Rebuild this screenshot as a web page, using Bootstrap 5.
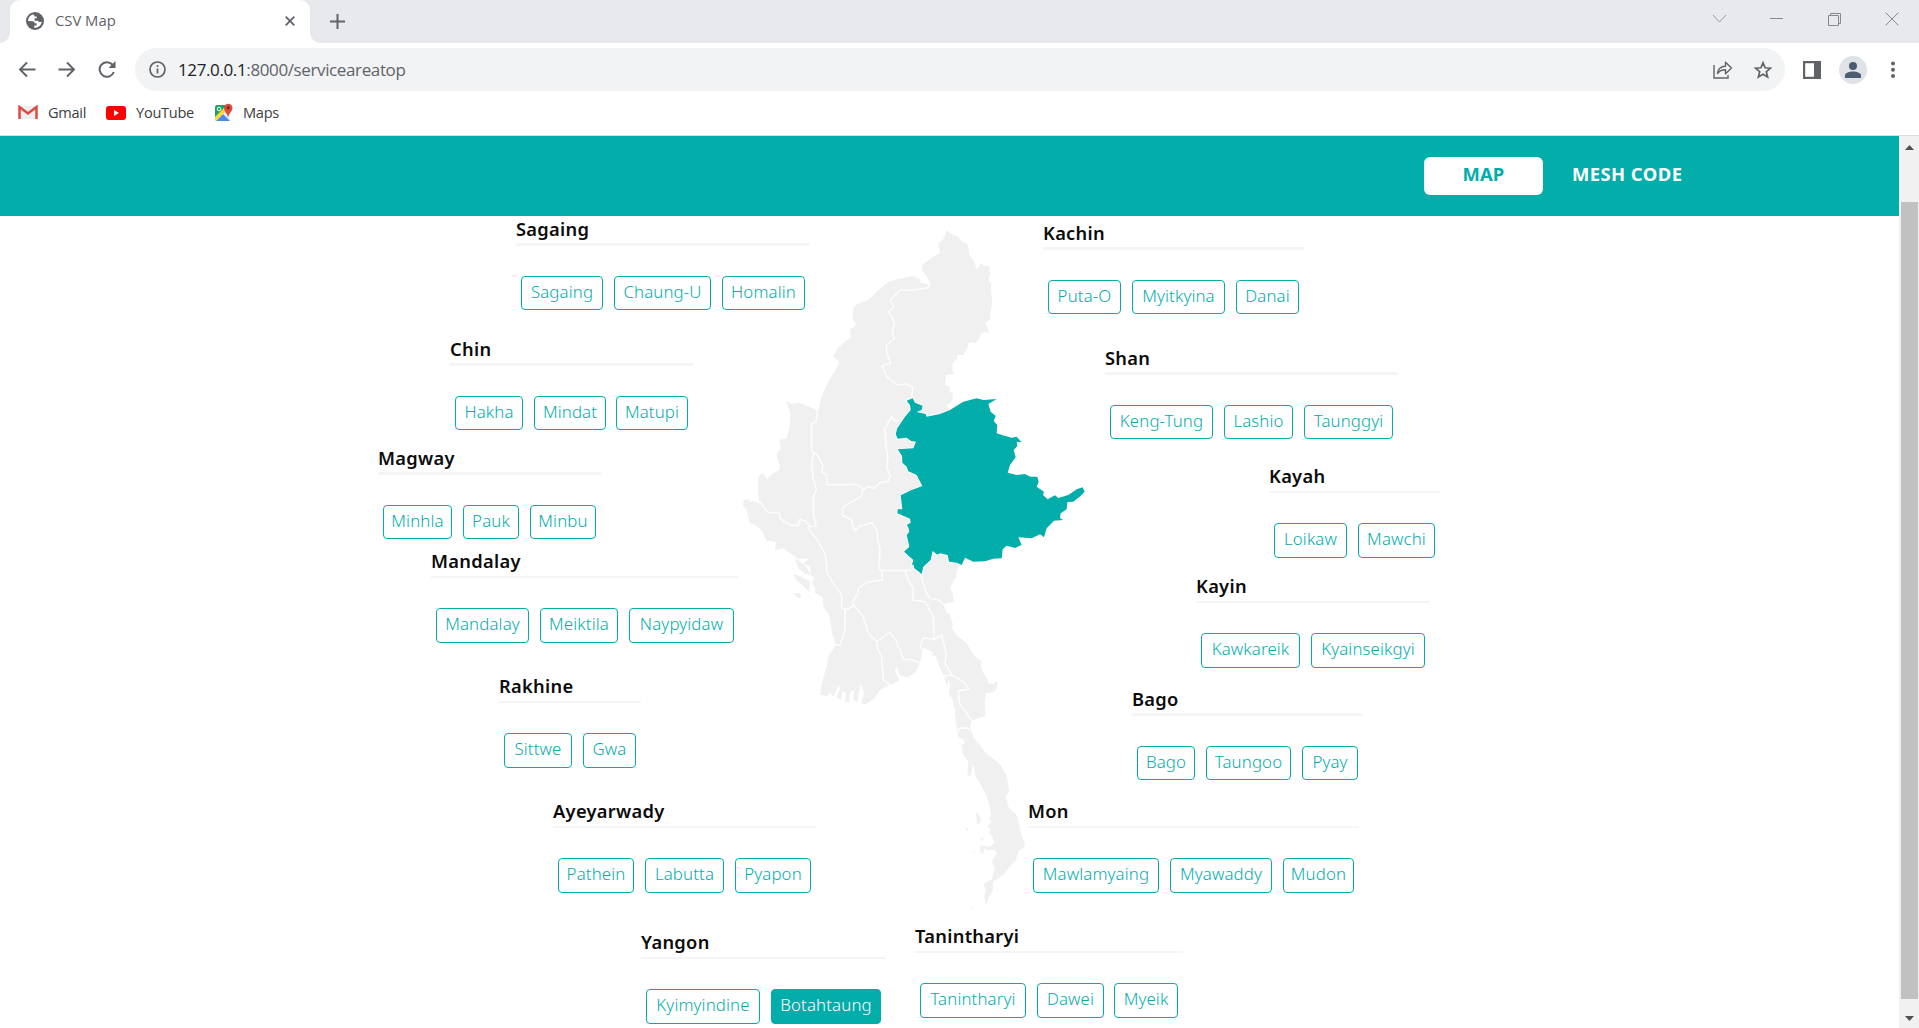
<!DOCTYPE html>
<html lang="en">
<head>
<meta charset="utf-8">
<title>CSV Map</title>
<link href="https://cdn.jsdelivr.net/npm/bootstrap@5.3.0/dist/css/bootstrap.min.css" rel="stylesheet">
<style>
:root{--teal:#02adaa}
body{font-family:"Noto Sans","Open Sans",sans-serif;height:1028px;overflow:hidden;background:#fff}
.chrome{font-family:"Open Sans","Noto Sans",sans-serif;color:#5f6368}
.chrome svg,.land{display:block;flex:none}
.tabstrip{height:43px;background:#e8e9ed;padding-left:10px}
.tab{width:300px;height:43px;background:#fff;border-radius:10px 10px 0 0;padding:0 15px 2px 16px;font-size:14.8px;position:relative}
.tab::before,.tab::after{content:"";position:absolute;bottom:0;width:10px;height:10px}
.tab::before{left:-10px;background:radial-gradient(circle at 0 0,#e8e9ed 9.5px,#fff 10px)}
.tab::after{right:-10px;background:radial-gradient(circle at 100% 0,#e8e9ed 9.5px,#fff 10px)}
.tabname{margin-left:11px}
.plus{margin-left:20px}
.wincontrols{gap:43px;padding:0 20px 6px 0}
.toolbar{height:53px;padding:0 24px 0 18px}
.navicons{gap:22px}
.omni{height:43px;width:1650px;margin-left:19px;border-radius:22px;background:#f1f3f4;padding:0 13px 0 14px}
.addr{font-size:17px;margin-left:12px;letter-spacing:-.38px}
.addr b{font-weight:400;color:#202124}
.star{margin-left:21px}
.panel{margin-left:18px}
.bookmarks{height:40px;padding:0 0 6px 18px;border-bottom:1px solid #d9dadc;font-size:14.6px;color:#3c4043}
.bm1{margin-left:10px;letter-spacing:-.3px}
.bmicon{margin-left:20px}
.page{height:892px}
.topbar{height:80px;background:var(--teal);padding:21px 0 0 1424px;font-weight:700;font-size:18.4px;line-height:34px}
.mapbtn{width:119px;height:38px;border-radius:6px;background:#fff;color:var(--teal);text-align:center;line-height:34px;letter-spacing:.1px}
.mesh{color:#fff;margin-left:29px;letter-spacing:.45px}
.sheet{width:1899px;height:812px;position:relative}
.colleft,.colright{position:relative;z-index:1}
.colleft{width:900px}
.colright{width:999px}
.land{position:absolute;left:730px;top:4px;width:370px;height:700px}
.region{width:max-content}
.region h2{font-size:18.3px;font-weight:600;line-height:20px;height:24px;margin:0;color:#0b0b0b;letter-spacing:.3px}
.rule{height:3px;background:#f5f5f5}
.region.thin h2{line-height:18px}
.thin .rule{height:2px}
.chips{padding:30px 5px 0;gap:11px}
.chip{height:34px;border:1px solid var(--teal);border-radius:4px;color:var(--teal);font-size:16.8px;font-weight:350;line-height:29px;text-align:center;white-space:nowrap;letter-spacing:.15px}
.thin .chip{height:35px}
.chip.on{background:var(--teal);color:#fff}
.chip.tight{margin-left:-1px}
/* offset of each region round the country */
.sagaing{margin:3px 0 0 516px}.chin{margin:29px 0 0 450px}.magway{margin:18px 0 0 378px}
.mandalay{margin:13px 0 0 431px}.rakhine{margin:34px 0 0 499px}.ayeyarwady{margin:34px 0 0 553px}.yangon{margin:40px 0 0 641px}
.kachin{margin:7px 0 0 143px}.shan{margin:34px 0 0 205px}.kayah{margin:28px 0 0 369px}
.kayin{margin:19px 0 0 296px}.bago{margin:21px 0 0 232px}.mon{margin:22px 0 0 128px}.tanintharyi{margin:34px 0 0 15px}
.w53{width:53px}.w56{width:56px}.w58{width:58px}.w63{width:63px}.w64{width:64px}.w66{width:66px}.w67{width:67px}.w68{width:68px}.w69{width:69px}.w71{width:71px}.w72{width:72px}.w73{width:73px}.w76{width:76px}.w77{width:77px}.w78{width:78px}.w79{width:79px}.w82{width:82px}.w83{width:83px}.w85{width:85px}.w89{width:89px}.w93{width:93px}.w97{width:97px}.w99{width:99px}.w102{width:102px}.w103{width:103px}.w105{width:105px}.w106{width:106px}.w110{width:110px}.w114{width:114px}.w126{width:126px}
.scrollbar{width:20px;background:#f1f1f1;padding:9px 1px 7px 2px}
.thumb{width:17px;height:797px;background:#c1c1c1;margin-top:52px}
</style>
</head>
<body>
<header class="chrome">
  <div class="tabstrip d-flex">
    <div class="tab d-flex align-items-center">
      <svg width="18" height="18" viewBox="0 0 18 18"><circle cx="9" cy="9" r="9" fill="#5f6368"/><path d="M7.3 2.2C4 3 2 5.600 2 9l4.600.2c1.500 0 2 .9 2 2h2v2.200H8.200v2.400c3.900.3 7.200-2.400 7.500-6.300-1.500.9-3.200.6-3.800-.8H8.600V6.300h2.200V4.800L8.900 4.600z" fill="#fff"/></svg>
      <span class="tabname">CSV Map</span>
      <svg class="ms-auto" width="10" height="10" viewBox="0 0 10 10"><path d="M.7.7l8.600 8.600M9.300.7L.7 9.300" stroke="#5f6368" stroke-width="1.800"/></svg>
    </div>
    <svg class="plus align-self-center" width="15" height="15" viewBox="0 0 15 15"><path d="M7.500 0v15M0 7.500h15" stroke="#5f6368" stroke-width="2"/></svg>
    <div class="wincontrols ms-auto d-flex align-items-center">
      <svg width="15" height="13" viewBox="0 0 15 13"><path d="M1 3l6.500 7L14 3" fill="none" stroke="#999a9d"/></svg>
      <svg width="14" height="13" viewBox="0 0 14 13"><path d="M0 6.500h13" stroke="#88898c"/></svg>
      <svg width="15" height="14" viewBox="0 0 15 14"><path d="M1.500 3.500h10v10h-10zM3.500 3V1.500h10v10H12" fill="none" stroke="#88898c"/></svg>
      <svg width="14" height="14" viewBox="0 0 14 14"><path d="M.5.5l13 13M13.500.5l-13 13" stroke="#88898c"/></svg>
    </div>
  </div>
  <div class="toolbar d-flex align-items-center">
    <div class="navicons d-flex align-items-center" >
      <svg width="18" height="17" viewBox="0 0 18 17"><path d="M17.500 8.500H2.500M9 1.500l-7 7 7 7" fill="none" stroke="#5f6368" stroke-width="1.900"/></svg>
      <svg width="18" height="17" viewBox="0 0 18 17"><path d="M.5 8.500h15M9 1.500l7 7-7 7" fill="none" stroke="#5f6368" stroke-width="1.900"/></svg>
      <svg width="18" height="17" viewBox="0 0 18 17"><path d="M14.300 3.500A7.300 7.300 0 1 0 15.800 11" fill="none" stroke="#5f6368" stroke-width="2"/><path d="M17.500 0v7h-7z" fill="#5f6368"/></svg>
    </div>
    <div class="omni d-flex align-items-center">
      <svg width="17" height="17" viewBox="0 0 17 17"><circle cx="8.500" cy="8.500" r="7.500" fill="none" stroke="#5f6368" stroke-width="1.700"/><path d="M8.500 7.500v5M8.500 4.300v1.800" stroke="#5f6368" stroke-width="1.700"/></svg>
      <span class="addr"><b>127.0.0.1</b>:8000/serviceareatop</span>
      <svg class="ms-auto" width="20" height="19" viewBox="0 0 20 19"><path d="M1 5v13h14v-3" fill="none" stroke="#5f6368" stroke-width="1.400"/><path d="M4.500 13.500c.5-4.500 3.500-7 8-7.200V2.200l6 5.900-6 5.700v-4c-3.500 0-6 1-8 3.700z" fill="none" stroke="#5f6368" stroke-width="1.400" stroke-linejoin="round"/></svg>
      <svg class="star" width="18" height="18" viewBox="0 0 18 18"><path d="M9 1.800l2.100 5 5.300.4-4.100 3.500 1.300 5.300L9 13.200 4.400 16l1.300-5.300-4.100-3.500 5.300-.4z" fill="none" stroke="#5f6368" stroke-width="1.700"/></svg>
    </div>
    <svg class="panel" width="18" height="18" viewBox="0 0 18 18"><path d="M0 0h18v18H0zM2.200 2.200v13.600H11V2.200z" fill="#5f6368" fill-rule="evenodd"/></svg>
    <svg class="ms-3" width="30" height="28" viewBox="0 0 30 28"><circle cx="16" cy="14" r="14" fill="#dfe2e7"/><circle cx="16" cy="10" r="4" fill="#4d5b70"/><path d="M8 22v-2.500c0-3 5-4 8-4s8 1 8 4V22z" fill="#4d5b70"/></svg>
    <svg class="ms-auto" width="4" height="18" viewBox="0 0 4 18"><g fill="#5f6368"><circle cx="2" cy="2.500" r="2"/><circle cx="2" cy="8.800" r="2"/><circle cx="2" cy="15" r="2"/></g></svg>
  </div>
  <div class="bookmarks d-flex align-items-center">
    <svg width="20" height="15" viewBox="0 0 20 15"><path d="M2 1h16v13H2z" fill="#eee"/><path d="M1.500 14V2L10 8.500 18.500 2v12" fill="none" stroke="#dc4b41" stroke-width="2.500"/></svg>
    <span class="bm1">Gmail</span>
    <svg class="bmicon" width="20" height="14" viewBox="0 0 20 14"><rect width="20" height="14" rx="3" fill="#f00"/><path d="M8 4l5 3-5 3z" fill="#fff"/></svg>
    <span class="bm1">YouTube</span>
    <svg class="bmicon" width="19" height="19" viewBox="0 0 19 19"><rect x="1" y="2" width="15" height="16" rx="1.500" fill="#eceff1"/><path d="M1 16V3.500L2.500 2H13L1 15z" fill="#1ea362"/><path d="M2 18l7-7 7 7z" fill="#4a8af4"/><path d="M1 17V14L11 4l2 3-11 11z" fill="#fdd835"/><path d="M14 15c-.3-5-4-6-4-10a4.200 4.200 0 0 1 8.500 0c0 4-4.200 5-4.500 10z" fill="#dc4b3e"/><circle cx="14.200" cy="4.700" r="1.500" fill="#7b231c"/><circle cx="5" cy="6" r="1.800" fill="none" stroke="#fff"/></svg>
    <span class="bm1">Maps</span>
  </div>
</header>
<div class="page d-flex">
  <main>
    <nav class="topbar d-flex"><div class="mapbtn">MAP</div><div class="mesh">MESH CODE</div></nav>
    <div class="sheet d-flex">
      <svg class="land" viewBox="0 0 1110 2100">
        <path fill="#f0f0f0" d="M650 30L668 45 685 50 696 65 710 70 715 85 720 108 735 128 738 145 745 143 752 130 763 138 778 138 780 165 776 180 783 190 783 212 787 250 782 270 781 298 765 308 778 337 755 338 745 360 738 370 718 366 712 385 700 405 682 405 680 418 668 430 667 450 672 462 648 465 645 495 660 502 658 515 668 520 668 542 650 558 665 570 730 700 700 1035 686 1038 678 1060 680 1072 670 1080 668 1090 660 1105 668 1120 672 1145 650 1150 640 1155 652 1180 658 1178 668 1210 665 1225 680 1245 710 1270 735 1310 752 1320 755 1350 772 1378 775 1390 790 1392 800 1382 803 1395 795 1412 785 1418 768 1420 764 1450 766 1488 752 1492 726 1502 720 1518 725 1530 730 1552 745 1570 770 1602 810 1632 826 1660 832 1675 837 1715 827 1730 835 1760 860 1785 864 1800 870 1830 885 1876 880 1885 865 1892 858 1920 840 1938 820 1965 790 1985 788 2015 777 2030 768 2058 763 2030 768 2010 760 1992 785 1978 795 1945 786 1925 800 1900 795 1890 770 1890 760 1878 780 1880 792 1870 788 1850 775 1835 785 1832 772 1818 785 1808 778 1795 784 1785 778 1755 768 1725 750 1690 738 1670 732 1640 728 1632 722 1668 712 1665 715 1625 700 1605 694 1575 705 1570 700 1558 685 1552 682 1530 676 1490 675 1470 668 1440 656 1420 660 1395 655 1380 640 1365 628 1340 618 1308 605 1305 610 1298 590 1288 583 1283 576 1292 575 1312 567 1335 555 1360 530 1372 508 1365 500 1340 494 1348 502 1370 508 1380 495 1388 480 1395 450 1410 435 1435 405 1454 393 1448 402 1420 393 1390 386 1420 384 1445 370 1442 372 1410 360 1418 358 1447 345 1445 348 1420 338 1412 332 1440 320 1432 330 1405 325 1395 310 1430 300 1420 312 1400 325 1370 315 1395 293 1428 270 1424 275 1390 290 1340 294 1310 318 1275 306 1240 303 1210 298 1185 280 1160 278 1130 254 1118 257 1105 245 1090 252 1075 243 1065 240 1040 220 1030 238 1015 205 1018 185 1002 158 985 135 992 138 965 112 962 95 945 105 955 95 932 75 915 60 910 50 870 38 855 42 840 52 837 60 845 70 843 88 850 85 820 85 770 97 760 112 778 122 765 148 750 150 735 143 722 140 700 152 685 148 660 170 655 180 615 180 575 167 542 185 552 210 548 222 555 240 560 258 570 262 580 275 530 295 485 322 440 328 425 310 410 322 385 362 350 360 330 378 315 368 290 370 262 385 250 415 240 440 215 475 185 500 178 550 168 570 178 572 188 602 195 590 170 576 150 576 135 610 110 630 100 625 70 640 58ZM190 1120L210 1120 214 1130 205 1135ZM190 1062L215 1070 240 1085 238 1115 215 1095 198 1080ZM195 1015L225 1035 243 1065 225 1062 205 1045ZM642 1375L655 1375 652 1400ZM738 1778L746 1782 755 1800 742 1815ZM750 1875L764 1880 760 1900 751 1898ZM728 1900L738 1880 732 1898ZM706 1820L716 1828 710 1832ZM720 2065L732 2058 722 2070ZM748 1860L762 1850 758 1862Z"/>
        <g fill="none" stroke="#fff" stroke-opacity=".85" stroke-width="4.500" stroke-linejoin="round">
          <path d="M602 195L590 205 545 211 508 211 500 222 480 240 492 262 476 275 485 290 494 312 486 340 494 355 470 375 470 400 482 430 456 437 470 468 500 495 530 492 548 502 545 535"/>
          <path d="M512 602L495 602 485 590 465 625 468 680 474 715 470 740 480 765 475 783 450 788 432 805 415 800 400 808 380 793 292 795 290 765 275 755 278 735 262 705 248 695"/>
          <path d="M262 580L258 605 245 610 245 690 250 700 245 740 250 780 260 810 250 830 250 880 258 917 240 920 228 905 210 897 205 917 180 915 150 895 148 880 115 877 88 845"/>
          <path d="M400 808L392 830 340 860 336 885 365 900 372 932 390 918 425 908 440 930 443 960 450 985 447 1050 525 1052 550 1048M455 1052L458 1080 415 1085 385 1105 382 1125 370 1140 368 1160 350 1168 335 1165 335 1125 310 1090 292 1060 285 1000 262 960 232 922"/>
          <path d="M345 1168L345 1230 330 1275 312 1275M370 1155L400 1190 415 1240 440 1265 480 1236 500 1265 520 1318 545 1320 567 1328M440 1265L443 1285 455 1310 460 1380 480 1395"/>
          <path d="M525 1052L535 1080 550 1105 548 1140 585 1145 610 1190 612 1258 635 1245 648 1300 645 1330 665 1365 700 1385 718 1408 685 1412 688 1450 726 1502M612 1258L580 1253 572 1275 575 1290M635 1368L665 1365M572 1062L585 1110 600 1135 628 1140 640 1155M682 1534L692 1523 712 1525 728 1534"/>
        </g>
        <path fill="#02adaa" stroke="#fff" stroke-width="5" paint-order="stroke" d="M548 535L555 548 578 557 575 570 560 576 587 582 590 590 630 582 660 570 700 545 740 535 760 540 800 537 775 552 782 575 797 588 791 603 802 615 800 640 818 646 845 653 860 650 875 667 860 665 862 678 851 690 857 712 840 735 833 758 860 765 885 762 900 770 922 770 926 785 920 800 942 815 939 825 953 838 975 826 985 834 1015 825 1040 808 1058 802 1064 815 1055 825 1030 845 1012 846 1010 868 992 880 990 895 1000 900 972 902 950 925 942 952 930 943 905 955 865 952 875 975 855 984 830 977 818 988 815 1015 790 1016 765 1024 730 1025 705 1013 695 1035 680 1028 657 1025 653 1005 630 1000 622 1004 608 993 602 1020 580 1040 575 1062 553 1045 550 1033 545 1037 550 1020 522 995 538 980 530 945 538 935 535 922 530 915 542 908 540 896 502 880 503 868 517 868 512 826 545 810 577 798 560 765 535 754 530 740 517 728 516 708 503 688 550 685 558 665 543 663 530 653 503 656 497 642 502 625 525 590 542 570 540 555 530 542Z"/>
      </svg>
      <section class="colleft">
        <div class="region sagaing"><h2>Sagaing</h2><div class="rule"></div><div class="chips d-flex"><span class="chip w82">Sagaing</span><span class="chip w97">Chaung-U</span><span class="chip w83">Homalin</span></div></div>
        <div class="region chin"><h2>Chin</h2><div class="rule"></div><div class="chips d-flex"><span class="chip w68">Hakha</span><span class="chip w72">Mindat</span><span class="chip tight w72">Matupi</span></div></div>
        <div class="region magway"><h2>Magway</h2><div class="rule"></div><div class="chips d-flex"><span class="chip w69">Minhla</span><span class="chip w56">Pauk</span><span class="chip w66">Minbu</span></div></div>
        <div class="region thin mandalay"><h2>Mandalay</h2><div class="rule"></div><div class="chips d-flex"><span class="chip w93">Mandalay</span><span class="chip w78">Meiktila</span><span class="chip w105">Naypyidaw</span></div></div>
        <div class="region thin rakhine"><h2>Rakhine</h2><div class="rule"></div><div class="chips d-flex"><span class="chip w68">Sittwe</span><span class="chip w53">Gwa</span></div></div>
        <div class="region thin ayeyarwady"><h2>Ayeyarwady</h2><div class="rule"></div><div class="chips d-flex"><span class="chip w76">Pathein</span><span class="chip w79">Labutta</span><span class="chip w76">Pyapon</span></div></div>
        <div class="region thin yangon"><h2>Yangon</h2><div class="rule"></div><div class="chips d-flex"><span class="chip w114">Kyimyindine</span><span class="chip on w110">Botahtaung</span></div></div>
      </section>
      <section class="colright">
        <div class="region kachin"><h2>Kachin</h2><div class="rule"></div><div class="chips d-flex"><span class="chip w73">Puta-O</span><span class="chip w93">Myitkyina</span><span class="chip w63">Danai</span></div></div>
        <div class="region shan"><h2>Shan</h2><div class="rule"></div><div class="chips d-flex"><span class="chip w103">Keng-Tung</span><span class="chip w69">Lashio</span><span class="chip w89">Taunggyi</span></div></div>
        <div class="region thin kayah"><h2>Kayah</h2><div class="rule"></div><div class="chips d-flex"><span class="chip w73">Loikaw</span><span class="chip w77">Mawchi</span></div></div>
        <div class="region thin kayin"><h2>Kayin</h2><div class="rule"></div><div class="chips d-flex"><span class="chip w99">Kawkareik</span><span class="chip w114">Kyainseikgyi</span></div></div>
        <div class="region bago"><h2>Bago</h2><div class="rule"></div><div class="chips d-flex"><span class="chip w58">Bago</span><span class="chip w85">Taungoo</span><span class="chip w56">Pyay</span></div></div>
        <div class="region thin mon"><h2>Mon</h2><div class="rule"></div><div class="chips d-flex"><span class="chip w126">Mawlamyaing</span><span class="chip w102">Myawaddy</span><span class="chip w71">Mudon</span></div></div>
        <div class="region thin tanintharyi"><h2>Tanintharyi</h2><div class="rule"></div><div class="chips d-flex"><span class="chip w106">Tanintharyi</span><span class="chip w67">Dawei</span><span class="chip tight w64">Myeik</span></div></div>
      </section>
    </div>
  </main>
  <aside class="scrollbar d-flex flex-column align-items-center">
    <svg class="flex-shrink-0" width="9" height="5" viewBox="0 0 9 5"><path d="M4.500 0L9 5H0z" fill="#505050"/></svg>
    <div class="thumb flex-shrink-0"></div>
    <svg class="mt-auto flex-shrink-0" width="9" height="5" viewBox="0 0 9 5"><path d="M4.500 5L9 0H0z" fill="#505050"/></svg>
  </aside>
</div>
<script src="https://cdn.jsdelivr.net/npm/bootstrap@5.3.0/dist/js/bootstrap.bundle.min.js"></script>
</body>
</html>
